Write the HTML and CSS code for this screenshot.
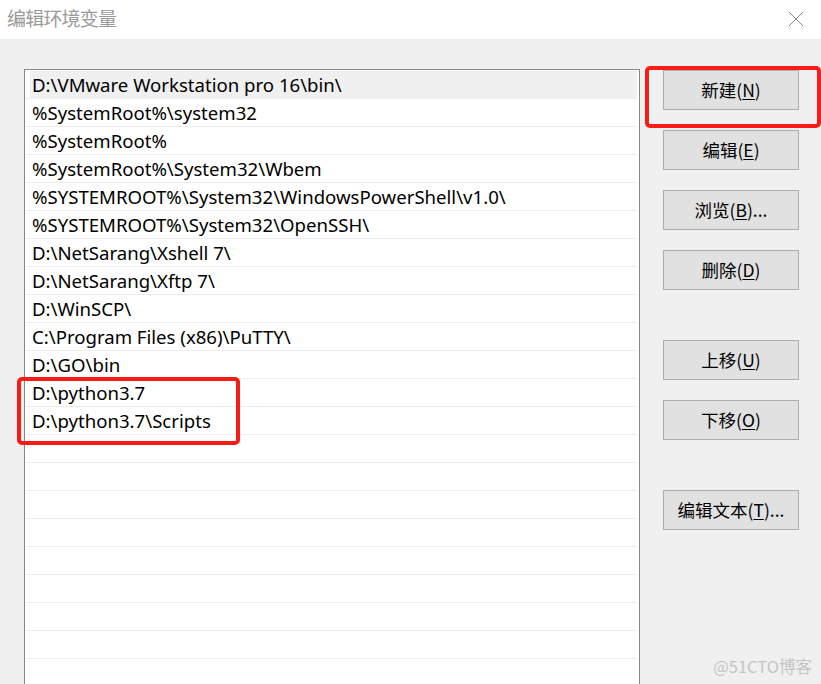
FILE: index.html
```html
<!DOCTYPE html>
<html lang="zh-CN">
<head>
<meta charset="utf-8">
<title>编辑环境变量</title>
<link rel="stylesheet" href="styles.css">
</head>
<body>
<div class="window">
  <header class="titlebar">
    <span class="title">编辑环境变量</span>
    <svg class="close" width="16" height="16" viewBox="0 0 16 16"><path d="M1 1 L15 15 M15 1 L1 15" stroke="#8a8a8a" stroke-width="1" fill="none"/></svg>
  </header>
  <main class="content">
    <div class="list">
      <div class="row selected">D:\VMware Workstation pro 16\bin\</div>
      <div class="row">%SystemRoot%\system32</div>
      <div class="row">%SystemRoot%</div>
      <div class="row">%SystemRoot%\System32\Wbem</div>
      <div class="row">%SYSTEMROOT%\System32\WindowsPowerShell\v1.0\</div>
      <div class="row">%SYSTEMROOT%\System32\OpenSSH\</div>
      <div class="row">D:\NetSarang\Xshell 7\</div>
      <div class="row">D:\NetSarang\Xftp 7\</div>
      <div class="row">D:\WinSCP\</div>
      <div class="row">C:\Program Files (x86)\PuTTY\</div>
      <div class="row">D:\GO\bin</div>
      <div class="row">D:\python3.7</div>
      <div class="row">D:\python3.7\Scripts</div>
      <div class="row"></div>
      <div class="row"></div>
      <div class="row"></div>
      <div class="row"></div>
      <div class="row"></div>
      <div class="row"></div>
      <div class="row"></div>
      <div class="row"></div>
      <div class="row"></div>
    </div>
    <div class="buttons">
      <button class="btn">新建(<u>N</u>)</button>
      <button class="btn">编辑(<u>E</u>)</button>
      <button class="btn">浏览(<u>B</u>)...</button>
      <button class="btn">删除(<u>D</u>)</button>
      <button class="btn gap-lg">上移(<u>U</u>)</button>
      <button class="btn">下移(<u>O</u>)</button>
      <button class="btn gap-lg">编辑文本(<u>T</u>)...</button>
    </div>
  </main>
  <div class="mark mark-new"></div>
  <div class="mark mark-python"></div>
  <div class="watermark">@51CTO博客</div>
</div>
</body>
</html>
```

FILE: styles.css
```css
html, body {
  margin: 0;
  padding: 0;
  height: 100%;
  overflow: hidden;
  background: #f0f0f0;
}

.window {
  position: relative;
  width: 821px;
  height: 684px;
  overflow: hidden;
  background: #f0f0f0;
  font-family: "Noto Sans", "Noto Sans CJK SC", sans-serif;
  color: #000;
}

.titlebar {
  height: 39px;
  background: #ffffff;
  display: flex;
  align-items: center;
  justify-content: space-between;
  padding: 0 17px 4px 7px;
  box-sizing: border-box;
}

.title {
  font-family: "Noto Sans CJK SC", sans-serif;
  font-size: 19px;
  color: #9a9a9a;
  letter-spacing: -0.8px;
}

.close {
  display: block;
  margin-top: 2px;
}

.content {
  display: flex;
  align-items: flex-start;
  padding: 30px 0 0 24px;
}

.list {
  width: 616px;
  height: 640px;
  background: #ffffff;
  border: 1px solid #828790;
  border-bottom: none;
  padding: 1px 2px 0 1px;
  box-sizing: border-box;
  flex: none;
}

.row {
  height: 28px;
  box-sizing: border-box;
  border-bottom: 1px solid #ececec;
  padding-left: 6px;
  font-size: 18.6px;
  line-height: 27px;
  white-space: nowrap;
  overflow: hidden;
}

.row.selected {
  background: linear-gradient(to right, transparent 4px, #f0f0f0 4px);
}

.buttons {
  display: flex;
  flex-direction: column;
  gap: 20px;
  margin-left: 23px;
  padding-top: 1px;
}

.btn {
  width: 136px;
  height: 40px;
  background: #e1e1e1;
  border: 1px solid #adadad;
  font-family: "Noto Sans CJK SC", sans-serif;
  font-size: 17.5px;
  color: #000;
  padding: 0;
  margin: 0;
  line-height: 1;
}

.btn u {
  text-decoration-thickness: 1px;
  text-underline-offset: 2px;
}

.btn.gap-lg {
  margin-top: 30px;
}

.mark {
  position: absolute;
  border: 4px solid #f91c16;
  border-radius: 5px;
  box-sizing: border-box;
}

.mark-new {
  left: 645px;
  top: 66px;
  width: 176px;
  height: 62px;
}

.mark-python {
  left: 17px;
  top: 377px;
  width: 223px;
  height: 68px;
}

.watermark {
  position: absolute;
  right: 9px;
  bottom: 6px;
  font-family: "Noto Sans CJK SC", sans-serif;
  font-size: 16.5px;
  color: #c4c4c4;
}
```
